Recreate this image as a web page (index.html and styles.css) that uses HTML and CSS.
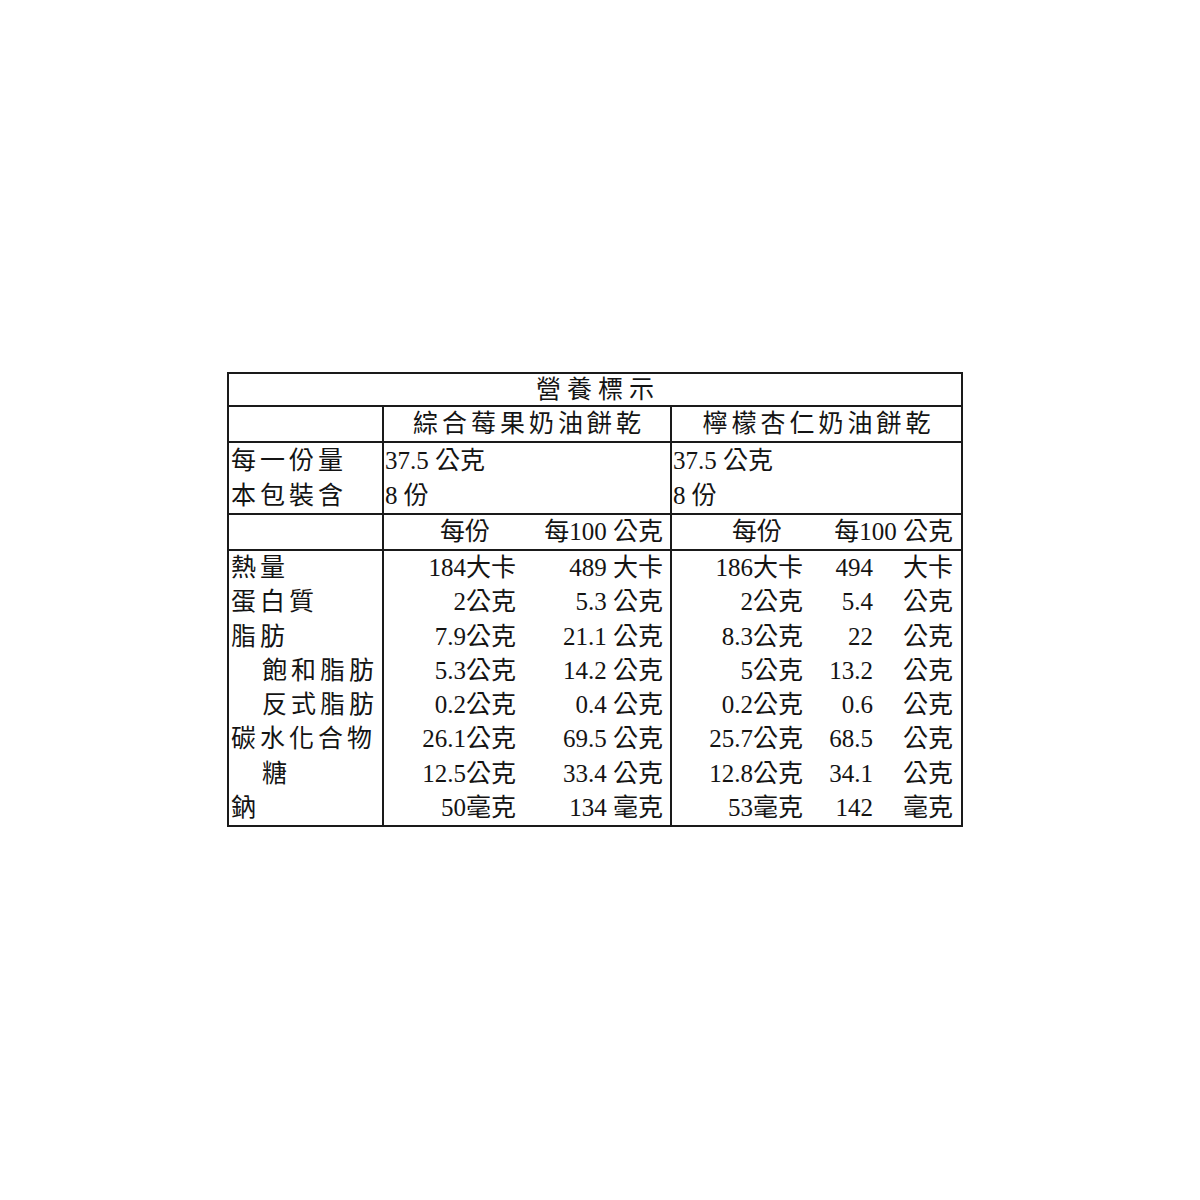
FILE: index.html
```html
<!DOCTYPE html>
<html lang="zh-Hant">
<head>
<meta charset="utf-8">
<title>營養標示</title>
<link rel="stylesheet" href="styles.css">
</head>
<body>
<div class="page">
  <div class="nutri">
    <div class="title">營養標示</div>
    <div class="row prod">
      <div class="c lab"></div>
      <div class="c p1 center">綜合莓果奶油餅乾</div>
      <div class="c p2 center">檸檬杏仁奶油餅乾</div>
    </div>
    <div class="row serve">
      <div class="c lab"><div class="ln">每一份量</div><div class="ln">本包裝含</div></div>
      <div class="c p1 left"><div class="ln">37.5 公克</div><div class="ln">8 份</div></div>
      <div class="c p2 left"><div class="ln">37.5 公克</div><div class="ln">8 份</div></div>
    </div>
    <div class="row hdr">
      <div class="c lab"></div>
      <div class="c p1 g1"><span class="h-ps">每份</span><span class="h-100">每100 公克</span></div>
      <div class="c p2 g2"><span class="h-ps2">每份</span><span class="h-1002">每100 公克</span></div>
    </div>
    <div class="row data">
      <div class="c lab">
        <div class="ln">熱量</div>
        <div class="ln">蛋白質</div>
        <div class="ln">脂肪</div>
        <div class="ln ind">飽和脂肪</div>
        <div class="ln ind">反式脂肪</div>
        <div class="ln">碳水化合物</div>
        <div class="ln ind">糖</div>
        <div class="ln">鈉</div>
      </div>
      <div class="c p1 g1 rows">
        <span>184大卡</span><span>489 大卡</span>
        <span>2公克</span><span>5.3 公克</span>
        <span>7.9公克</span><span>21.1 公克</span>
        <span>5.3公克</span><span>14.2 公克</span>
        <span>0.2公克</span><span>0.4 公克</span>
        <span>26.1公克</span><span>69.5 公克</span>
        <span>12.5公克</span><span>33.4 公克</span>
        <span>50毫克</span><span>134 毫克</span>
      </div>
      <div class="c p2 g3 rows">
        <span>186大卡</span><span>494</span><span>大卡</span>
        <span>2公克</span><span>5.4</span><span>公克</span>
        <span>8.3公克</span><span>22</span><span>公克</span>
        <span>5公克</span><span>13.2</span><span>公克</span>
        <span>0.2公克</span><span>0.6</span><span>公克</span>
        <span>25.7公克</span><span>68.5</span><span>公克</span>
        <span>12.8公克</span><span>34.1</span><span>公克</span>
        <span>53毫克</span><span>142</span><span>毫克</span>
      </div>
    </div>
  </div>
</div>
</body>
</html>
```
FILE: styles.css
```css
html, body {
  margin: 0;
  padding: 0;
  background: #ffffff;
}
body {
  font-family: "Liberation Serif", "Noto Sans CJK TC", serif;
  font-size: 25px;
  color: #141414;
}
.page {
  padding: 372px 0 0 227px;
}
.nutri {
  width: 736px;
  box-sizing: border-box;
  border: 2px solid #1a1a1a;
}
.title {
  height: 31px;
  line-height: 31px;
  text-align: center;
  letter-spacing: 6px;
  padding-left: 6px;
  border-bottom: 2px solid #1a1a1a;
}
.row {
  display: grid;
  grid-template-columns: 155px 288px 289px;
  border-bottom: 2px solid #1a1a1a;
}
.row.data {
  border-bottom: none;
}
.c {
  box-sizing: border-box;
  border-right: 2px solid #1a1a1a;
  white-space: nowrap;
}
.c.p2 {
  border-right: none;
}
.prod .c {
  height: 34px;
  line-height: 34px;
}
.center {
  text-align: center;
  letter-spacing: 4px;
  padding-left: 4px;
}
.serve .c {
  height: 70px;
}
.serve .ln {
  height: 35px;
  line-height: 35px;
}
.lab {
  padding-left: 2px;
  letter-spacing: 4px;
}
.left {
  padding-left: 1px;
}
.hdr .c {
  height: 34px;
  line-height: 34px;
}
.data .c {
  height: 274px;
}
.data .ln {
  height: 34.25px;
  line-height: 34.25px;
}
.data .ind {
  padding-left: 31px;
}
.g1 {
  display: grid;
  grid-template-columns: 132px 147px;
  grid-auto-rows: 34.25px;
}
.g2 {
  display: grid;
  grid-template-columns: 131px 150px;
}
.g3 {
  display: grid;
  grid-template-columns: 131px 70px 80px;
  grid-auto-rows: 34.25px;
}
.rows span {
  text-align: right;
  line-height: 34.25px;
}
.h-ps {
  text-align: right;
  padding-right: 26px;
}
.h-100 {
  text-align: right;
}
.h-ps2 {
  text-align: right;
  padding-right: 21px;
}
.h-1002 {
  text-align: right;
}
```
